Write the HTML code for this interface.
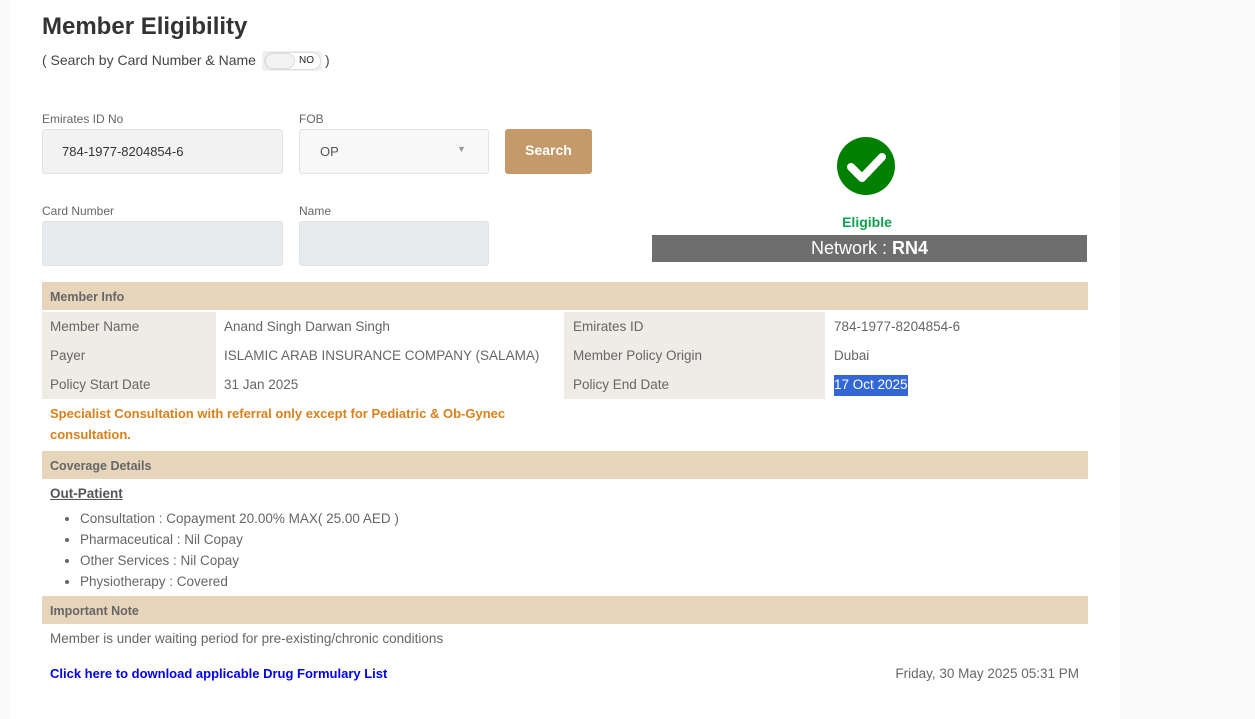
<!DOCTYPE html>
<html><head><meta charset="utf-8"><style>
*{margin:0;padding:0;box-sizing:border-box}
body{width:1255px;height:719px;background:#fafafa;font-family:"Liberation Sans",sans-serif;color:#666;position:relative;overflow:hidden;font-size:13.5px}
.a{position:absolute;white-space:nowrap}
.page{position:absolute;left:10px;top:0;width:1110px;height:719px;background:#fff}
.lbl{font-size:12px;color:#666}
.inp{position:absolute;border:1px solid #e2e2e2;border-radius:3px}
.hdr{position:absolute;left:42px;width:1046px;height:28px;background:#e6d5bb;font-weight:bold;font-size:12.5px;color:#666;padding:8px 8px}
.cellb{position:absolute;background:#efebe5}
li{font-size:13.5px;height:21px;line-height:21px}
</style></head><body>
<div class="page"></div>
<div class="a" style="left:42px;top:13px;font-size:24px;font-weight:bold;color:#333">Member Eligibility</div>
<div class="a" style="left:42px;top:52px;font-size:14px;color:#444">( Search by Card Number &amp; Name</div>
<div class="a" style="left:262px;top:51px;width:60px;height:20px;background:#f0f0f0;border-radius:3px"></div>
<div class="a" style="left:264px;top:52px;width:57px;height:18px;background:#fff;border:1px solid #ddd;border-radius:9px"></div>
<div class="a" style="left:265px;top:53px;width:30px;height:16px;background:#f3f3f3;border:1px solid #ddd;border-radius:8px"></div>
<div class="a" style="left:299px;top:55px;font-size:10px;color:#222">NO</div>
<div class="a" style="left:325px;top:52px;font-size:14px;color:#444">)</div>

<div class="a lbl" style="left:42px;top:112px">Emirates ID No</div>
<div class="inp" style="left:42px;top:129px;width:241px;height:45px;background:#f2f2f2"></div>
<div class="a" style="left:62px;top:144px;font-size:13px;color:#333">784-1977-8204854-6</div>
<div class="a lbl" style="left:299px;top:112px">FOB</div>
<div class="inp" style="left:299px;top:129px;width:190px;height:45px;background:#f8f8f8"></div>
<div class="a" style="left:320px;top:144px;font-size:13px;color:#555">OP</div>
<div class="a" style="left:457px;top:144px;font-size:9px;color:#999">▼</div>
<div class="a" style="left:505px;top:129px;width:87px;height:45px;background:#c49a6a;border-radius:3px;color:#fff;font-size:14px;font-weight:bold;text-align:center;line-height:43px">Search</div>

<div class="a lbl" style="left:42px;top:204px">Card Number</div>
<div class="inp" style="left:42px;top:221px;width:241px;height:45px;background:#e8ebee"></div>
<div class="a lbl" style="left:299px;top:204px">Name</div>
<div class="inp" style="left:299px;top:221px;width:190px;height:45px;background:#e8ebee"></div>

<svg class="a" style="left:837px;top:137px" width="58" height="58" viewBox="0 0 58 58"><circle cx="29" cy="29" r="29" fill="#008000"/><path d="M14 30 L25 41 L45 20" stroke="#fff" stroke-width="8" fill="none" stroke-linecap="round" stroke-linejoin="round"/></svg>
<div class="a" style="left:652px;width:430px;top:214px;text-align:center;font-weight:bold;font-size:14px;color:#10a050">Eligible</div>
<div class="a" style="left:652px;top:235px;width:435px;height:27px;background:#6e6e6e;color:#fff;font-size:18px;text-align:center;line-height:27px">Network : <b>RN4</b></div>

<div class="hdr" style="top:282px">Member Info</div>
<div class="cellb" style="left:42px;top:312px;width:174px;height:87px"></div>
<div class="cellb" style="left:564px;top:312px;width:261px;height:87px"></div>
<div class="a" style="left:50px;top:319px">Member Name</div>
<div class="a" style="left:224px;top:319px">Anand Singh Darwan Singh</div>
<div class="a" style="left:573px;top:319px">Emirates ID</div>
<div class="a" style="left:834px;top:319px">784-1977-8204854-6</div>
<div class="a" style="left:50px;top:348px">Payer</div>
<div class="a" style="left:224px;top:348px">ISLAMIC ARAB INSURANCE COMPANY (SALAMA)</div>
<div class="a" style="left:573px;top:348px">Member Policy Origin</div>
<div class="a" style="left:834px;top:348px">Dubai</div>
<div class="a" style="left:50px;top:377px">Policy Start Date</div>
<div class="a" style="left:224px;top:377px">31 Jan 2025</div>
<div class="a" style="left:573px;top:377px">Policy End Date</div>
<div class="a" style="left:834px;top:375px;background:#3367d6;color:#fff;padding:2px 0;height:21px">17 Oct 2025</div>

<div class="a" style="left:50px;top:403px;font-weight:bold;color:#d9801a;font-size:13px;line-height:21px">Specialist Consultation with referral only except for Pediatric &amp; Ob-Gynec<br>consultation.</div>

<div class="hdr" style="top:451px">Coverage Details</div>
<div class="a" style="left:50px;top:486px;font-weight:bold;text-decoration:underline;color:#555">Out-Patient</div>
<ul class="a" style="left:80px;top:508px;list-style:disc">
<li>Consultation : Copayment 20.00% MAX( 25.00 AED )</li>
<li>Pharmaceutical : Nil Copay</li>
<li>Other Services : Nil Copay</li>
<li>Physiotherapy : Covered</li>
</ul>
<div class="hdr" style="top:596px">Important Note</div>
<div class="a" style="left:50px;top:631px">Member is under waiting period for pre-existing/chronic conditions</div>
<div class="a" style="left:50px;top:666px;color:#0000ee;font-weight:bold;font-size:13px">Click here to download applicable Drug Formulary List</div>
<div class="a" style="right:176px;top:666px">Friday, 30 May 2025 05:31 PM</div>
</body></html>
